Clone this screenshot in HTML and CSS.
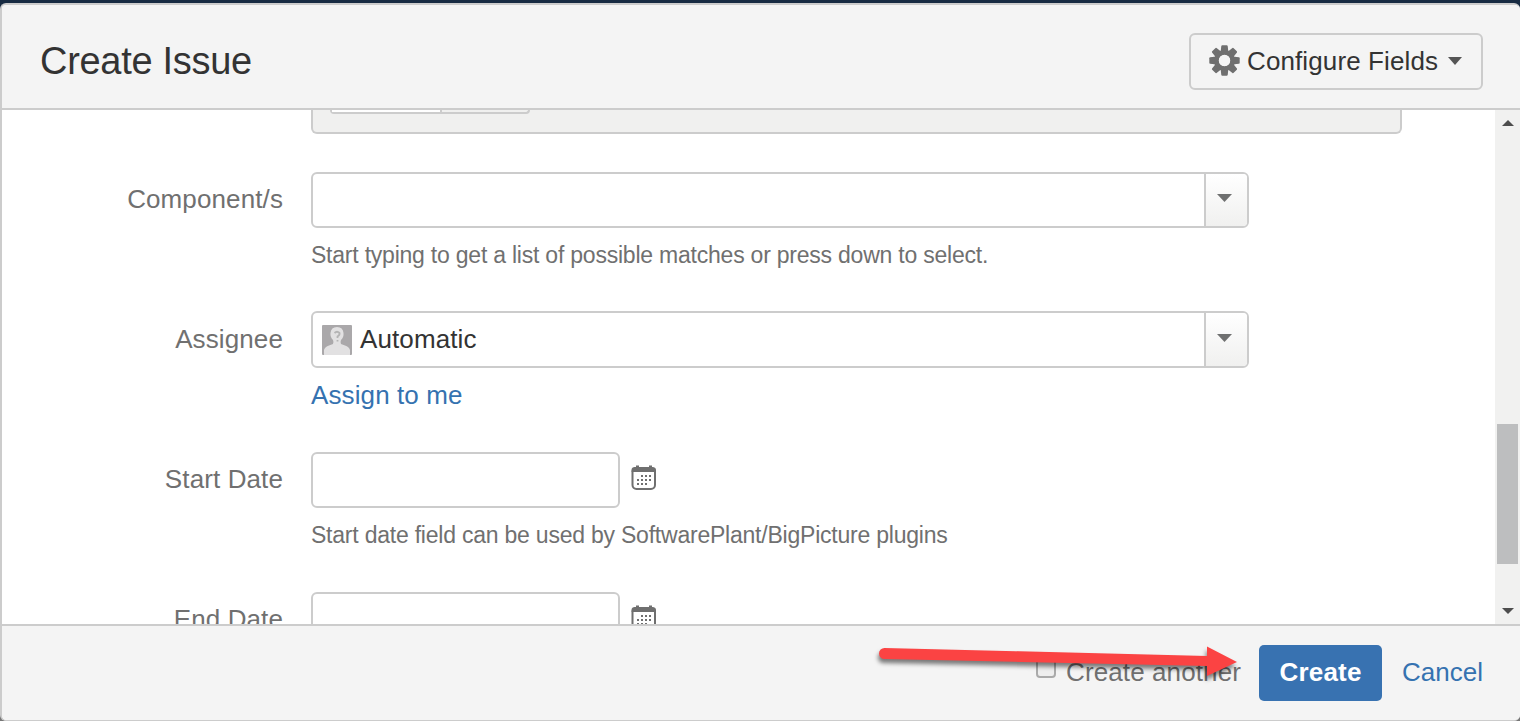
FILE: index.html
```html
<!DOCTYPE html>
<html lang="en">
<head>
<meta charset="utf-8">
<title>Create Issue</title>
<link rel="stylesheet" href="styles.css">
</head>
<body>
<div class="dialog">
  <header class="dialog-header">
    <h1 class="title">Create Issue</h1>
    <button class="configure" type="button">
      <svg class="gear" width="32" height="32" viewBox="-16.5 -15.5 32 32">
        <g fill="#6f6f6f">
          <path id="tooth" d="M-3.9-8 L-3.200-14.400 Q-3-15.200-2.200-15.200 H2.200 Q3-15.200 3.200-14.400 L3.900-8Z"/>
          <use href="#tooth" transform="rotate(45)"/><use href="#tooth" transform="rotate(90)"/>
          <use href="#tooth" transform="rotate(135)"/><use href="#tooth" transform="rotate(180)"/>
          <use href="#tooth" transform="rotate(225)"/><use href="#tooth" transform="rotate(270)"/>
          <use href="#tooth" transform="rotate(315)"/>
        </g>
        <circle r="8" fill="none" stroke="#6f6f6f" stroke-width="5"/>
        <circle r="5.7" fill="#f4f4f4"/>
      </svg>
      <span class="configure-label">Configure Fields</span>
      <svg class="caret" width="14" height="8" viewBox="0 0 14 8"><path d="M0 0H14L7 8Z" fill="#555"/></svg>
    </button>
  </header>
  <main class="dialog-body">
    <div class="form">
      <div class="panel"><div class="tabs"><span class="tab-active"></span><span class="tab"></span></div></div>
      <div class="row">
        <label class="label component-label">Component/s</label>
        <div class="field">
          <div class="select">
            <div class="select-value"></div>
            <div class="select-arrow"><svg width="15" height="8" viewBox="0 0 15 8"><path d="M0 0H15L7.5 8Z" fill="#6f7070"/></svg></div>
          </div>
          <div class="hint hint-component">Start typing to get a list of possible matches or press down to select.</div>
        </div>
      </div>
      <div class="row">
        <label class="label assignee-label">Assignee</label>
        <div class="field">
          <div class="select select-tall">
            <div class="select-value">
              <svg class="avatar" width="30" height="30" viewBox="0 0 30 30">
                <rect width="30" height="30" rx="1" fill="#aaa8aa"/>
                <path d="M2 30V25Q3 21.5 7 20.5L11 19Q12 17.5 11 15Q8 12 8.5 8Q9 2 15 2T21.5 8Q22 12 19 15Q18 17.5 19 19L23 20.5Q27 21.5 28 25V30Z" fill="#e2e1e2"/>
                <path d="M12.5 8Q15 5.500 17.500 8Q18 10 15.500 11.500V13M15.500 15V16.500" fill="none" stroke="#b4b4b4" stroke-width="1.800"/>
              </svg>
              <span class="value">Automatic</span>
            </div>
            <div class="select-arrow"><svg width="15" height="8" viewBox="0 0 15 8"><path d="M0 0H15L7.5 8Z" fill="#6f7070"/></svg></div>
          </div>
          <a class="assign">Assign to me</a>
        </div>
      </div>
      <div class="row">
        <label class="label start-label">Start Date</label>
        <div class="field">
          <div class="date">
            <div class="input"></div>
            <svg class="calendar" width="26" height="26" viewBox="0 0 26 26">
              <rect x="1.500" y="3" width="22.500" height="21" rx="4" fill="none" stroke="#6f6f6f" stroke-width="2"/>
              <path d="M.5 7V5Q.5 2 4 2H5V.5H8V2H18V.5H21V2Q25 2 25 5V7Z" fill="#6f6f6f"/>
              <path id="days" d="M10 11H20M6 15H20M6 19H16" stroke="#6f6f6f" stroke-width="2" stroke-dasharray="2 2"/>
            </svg>
          </div>
          <div class="hint hint-date">Start date field can be used by SoftwarePlant/BigPicture plugins</div>
        </div>
      </div>
      <div class="row">
        <label class="label end-label">End Date</label>
        <div class="field">
          <div class="date">
            <div class="input"></div>
            <svg class="calendar" width="26" height="26" viewBox="0 0 26 26">
              <rect x="1.500" y="3" width="22.500" height="21" rx="4" fill="none" stroke="#6f6f6f" stroke-width="2"/>
              <path d="M.5 7V5Q.5 2 4 2H5V.5H8V2H18V.5H21V2Q25 2 25 5V7Z" fill="#6f6f6f"/>
              <use href="#days"/>
            </svg>
          </div>
        </div>
      </div>
    </div>
    <div class="scrollbar">
      <svg width="12" height="6" viewBox="0 0 12 6"><path d="M0 6L6 0L12 6Z" fill="#4d4d4d"/></svg>
      <div class="thumb"></div>
      <svg width="12" height="6" viewBox="0 0 12 6"><path d="M0 0H12L6 6Z" fill="#4d4d4d"/></svg>
    </div>
  </main>
  <footer class="dialog-footer">
    <span class="checkbox"></span>
    <span class="another">Create another</span>
    <button class="create" type="button">Create</button>
    <a class="cancel">Cancel</a>
  </footer>
</div>
<svg class="arrow" width="380" height="60" viewBox="870 635 380 60">
  <path d="M884.500 648L1207 656V646.500L1237 662L1207 676V666L884.500 659A5.500 5.500 0 0 1 884.500 648Z" fill="#fb4343"/>
</svg>
</body>
</html>
```
FILE: styles.css
```css
* { box-sizing: border-box; }
body {
  margin: 0;
  height: 721px;
  padding-top: 3px;
  overflow: hidden;
  background: linear-gradient(#172b42 0 50%, #777 50%);
  font-family: "Liberation Sans", Arial, sans-serif;
  font-size: 26px;
  line-height: 30px;
  letter-spacing: .11px;
  color: #333;
}
svg { display: block; flex: none; }
.dialog {
  display: flex;
  flex-direction: column;
  height: 718px;
  border: solid #ccc;
  border-width: 2px 0 1px 2px;
  border-radius: 6px;
  overflow: hidden;
  background: #fff;
}
.dialog-header {
  display: flex;
  justify-content: space-between;
  align-items: flex-start;
  height: 105px;
  flex: none;
  padding: 28px 37px 0 38px;
  background: #f4f4f4;
  border-bottom: 2px solid #ccc;
}
.title { margin: 6px 0 0; font-size: 38px; line-height: 44px; font-weight: 400; letter-spacing: -.3px; white-space: nowrap; }
.configure {
  display: flex;
  align-items: center;
  width: 294px;
  height: 57px;
  padding: 0 0 2px 17px;
  border: 2px solid #ccc;
  border-radius: 6px;
  background: #f4f4f4;
  font: inherit;
  letter-spacing: inherit;
  color: #333;
}
.configure-label { width: 192px; margin-left: 7px; margin-right: 9px; text-align: left; white-space: nowrap; }
.dialog-body { display: flex; height: 514px; flex: none; overflow: hidden; }
.form { flex: 1; }
.panel {
  width: 1091px;
  height: 24px;
  margin-left: 309px;
  margin-bottom: 38px;
  padding-left: 17px;
  border: 2px solid #ccc;
  border-top: 0;
  border-radius: 0 0 6px 6px;
  background: #f0f0ef;
}
.tabs { display: flex; width: 200px; height: 4px; border: 2px solid #ccc; border-top: 0; border-radius: 0 0 6px 6px; }
.tab-active { width: 110px; background: #fff; border-right: 2px solid #ccc; }
.row { display: flex; height: 140px; }
.label { width: 281px; padding-top: 12px; text-align: right; color: #707070; white-space: nowrap; }
.field { margin-left: 28px; }
.select { display: flex; width: 938px; height: 56px; border: 2px solid #ccc; border-radius: 6px; overflow: hidden; }
.select-tall { height: 57px; margin-top: -1px; }
.select-value { display: flex; align-items: center; flex: 1; padding-left: 9px; }
.value { margin: 0 0 2px 8px; }
.select-arrow { width: 43px; border-left: 2px solid #ccc; padding: 20px 0 0 11px; background: linear-gradient(#fff, #f0f0ef); }
.select-tall .select-arrow { padding-top: 21px; }
.hint { margin-top: 12px; font-size: 23px; letter-spacing: -.222px; color: #707070; white-space: nowrap; }
.assign { display: block; margin-top: 12px; color: #3572b0; white-space: nowrap; }
.date { display: flex; }
.input { width: 309px; height: 56px; border: 2px solid #ccc; border-radius: 6px; }
.calendar { margin: 13px 0 0 11px; }
.scrollbar { display: flex; flex-direction: column; align-items: center; width: 25px; padding-top: 10px; background: #f1f1f0; }
.thumb { width: 21px; height: 140px; margin: 298px 0 44px; background: #bdbebf; }
.dialog-footer {
  display: flex;
  align-items: flex-start;
  justify-content: flex-end;
  flex: 1;
  padding: 19px 37px 0 0;
  background: #f4f4f4;
  border-top: 2px solid #ccc;
}
.checkbox { width: 20px; height: 20px; margin: 13px 10px 0 0; border: 2px solid #aaa; border-radius: 4px; background: #eee; }
.another { width: 175px; margin: 12px 18px 0 0; color: #707070; white-space: nowrap; }
.create { width: 123px; height: 56px; padding: 0 0 2px; border: 0; border-radius: 5px; background: #3872b1; color: #fff; font: inherit; letter-spacing: .2px; font-weight: 700; }
.cancel { width: 81px; margin: 12px 0 0 20px; letter-spacing: 0; color: #3572b0; white-space: nowrap; }
.arrow { position: absolute; left: 870px; top: 635px; filter: drop-shadow(-1px 4px 2px rgba(0, 0, 0, .5)); }
```
